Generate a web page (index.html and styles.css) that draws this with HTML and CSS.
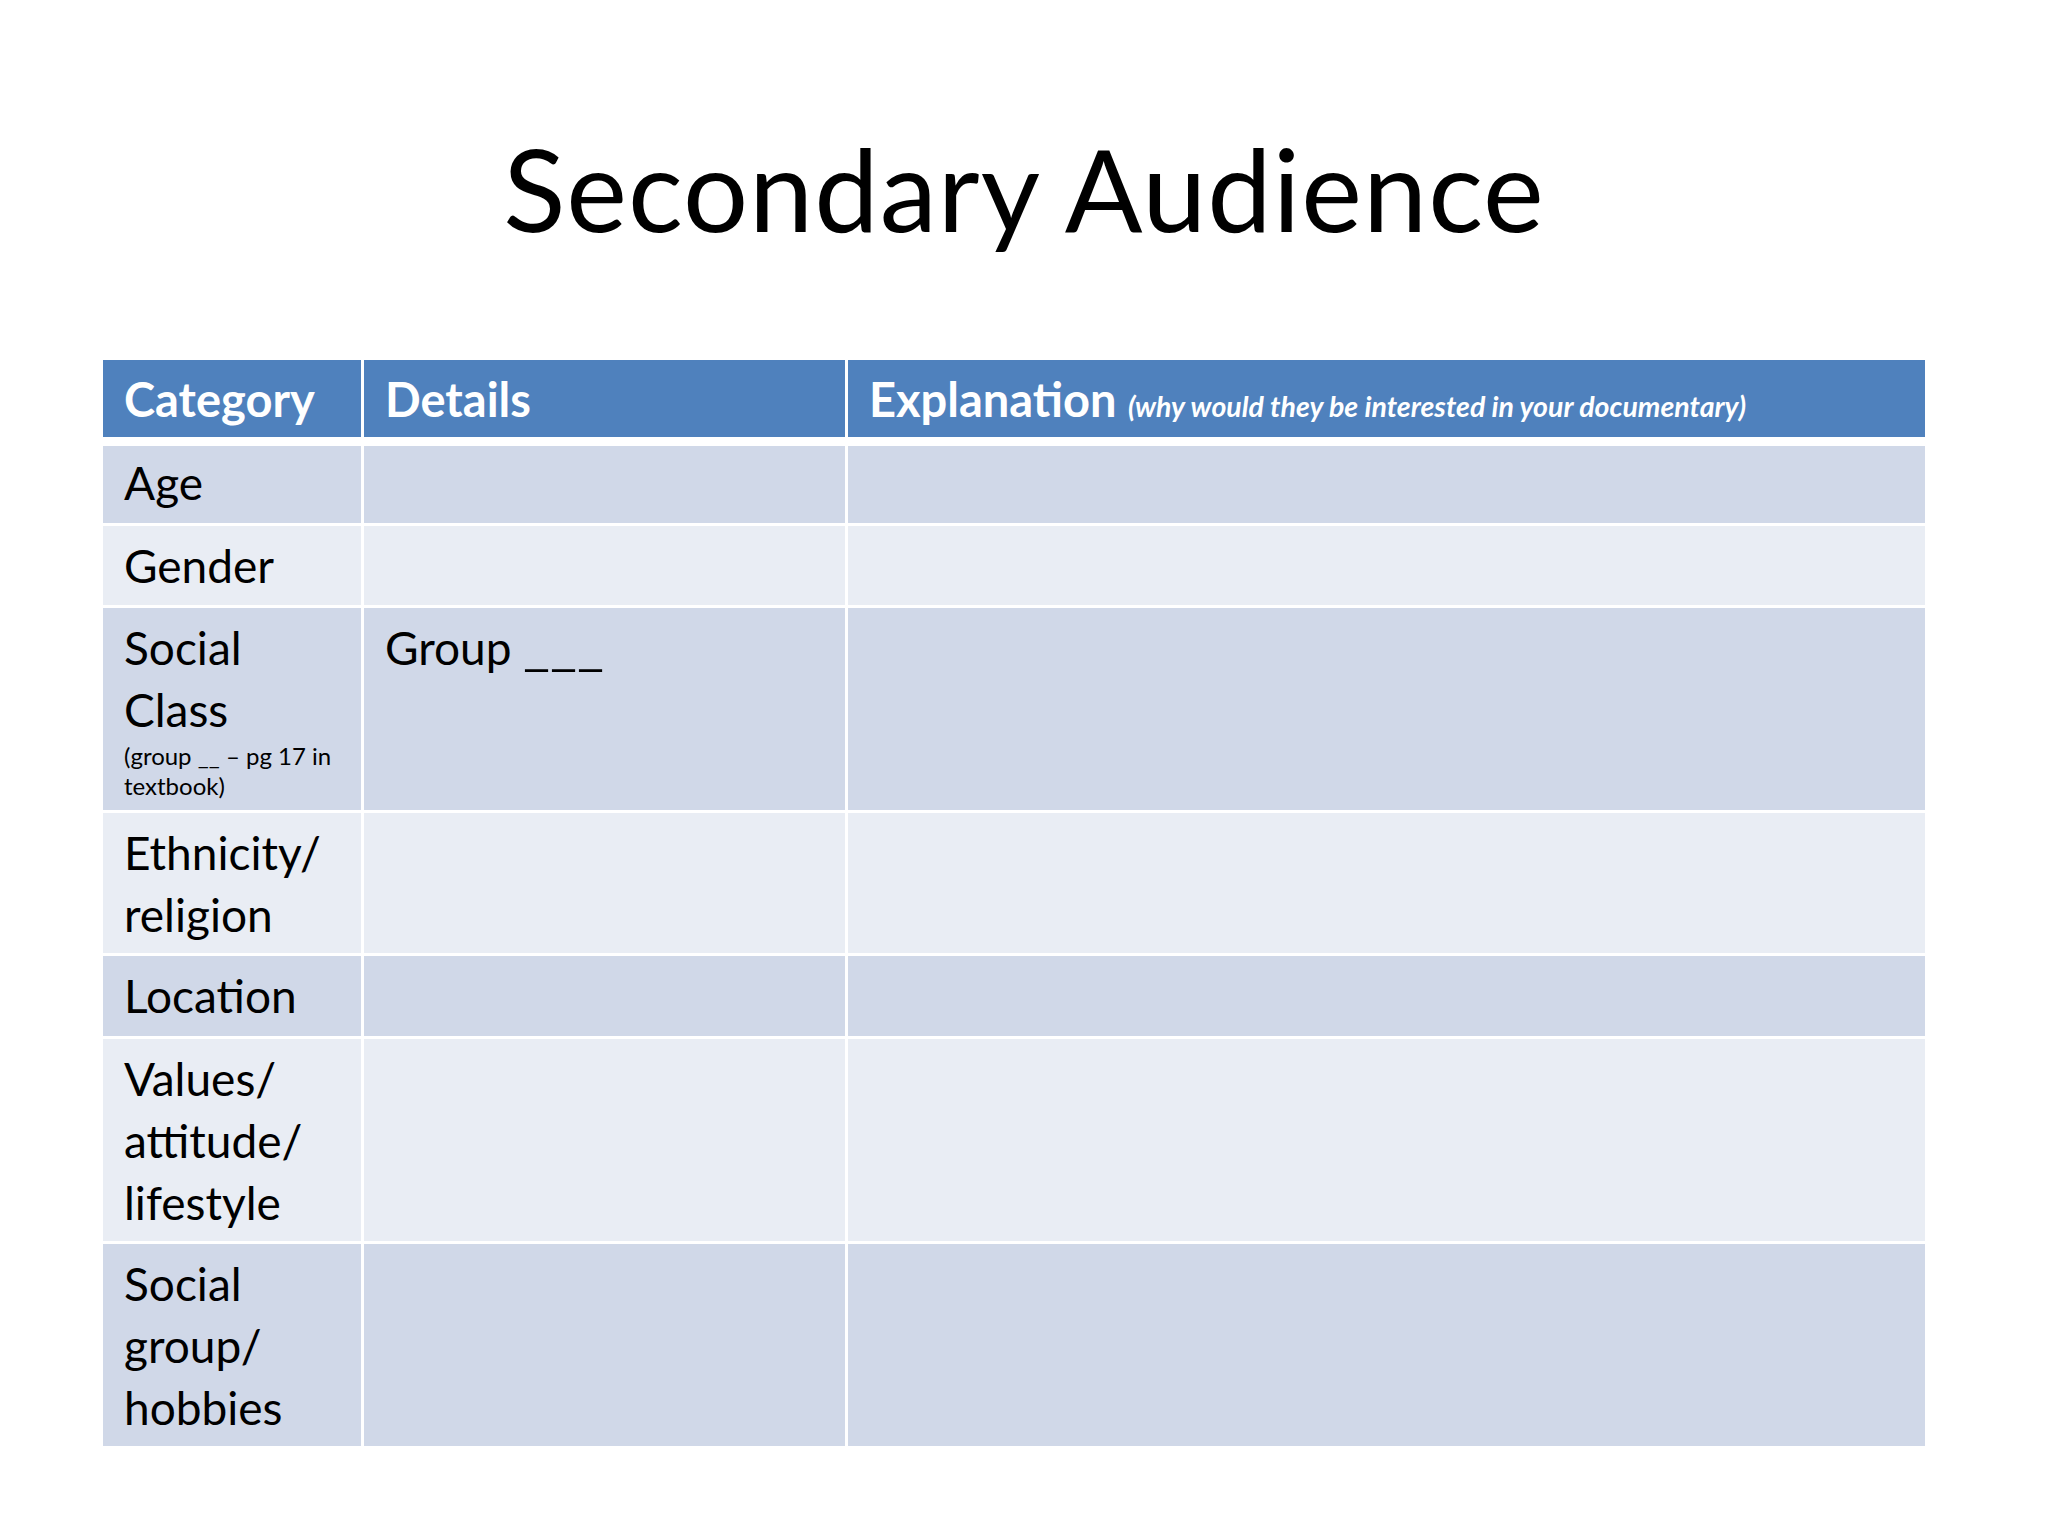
FILE: index.html
```html
<!DOCTYPE html>
<html lang="en">
<head>
<meta charset="utf-8">
<title>Secondary Audience</title>
<link rel="stylesheet" href="styles.css">
</head>
<body>
<div class="slide">
  <h1 class="title">Secondary Audience</h1>
  <div class="table">
    <div class="row head">
      <div class="cell">Category</div>
      <div class="cell">Details</div>
      <div class="cell">Explanation <span class="note">(why would they be interested in your documentary)</span></div>
    </div>
    <div class="row odd h1r">
      <div class="cell first">Age</div>
      <div class="cell"></div>
      <div class="cell"></div>
    </div>
    <div class="row even h1g">
      <div class="cell">Gender</div>
      <div class="cell"></div>
      <div class="cell"></div>
    </div>
    <div class="row odd h3">
      <div class="cell">Social<br>Class<div class="small">(group __ – pg 17 in<br>textbook)</div></div>
      <div class="cell">Group <span class="blank">___</span></div>
      <div class="cell"></div>
    </div>
    <div class="row even h2">
      <div class="cell">Ethnicity/<br>religion</div>
      <div class="cell"></div>
      <div class="cell"></div>
    </div>
    <div class="row odd h1l">
      <div class="cell">Location</div>
      <div class="cell"></div>
      <div class="cell"></div>
    </div>
    <div class="row even h3">
      <div class="cell">Values/<br>attitude/<br>lifestyle</div>
      <div class="cell"></div>
      <div class="cell"></div>
    </div>
    <div class="row odd h3">
      <div class="cell">Social<br>group/<br>hobbies</div>
      <div class="cell"></div>
      <div class="cell"></div>
    </div>
  </div>
</div>
</body>
</html>
```

FILE: styles.css
```css
html, body {
  margin: 0;
  padding: 0;
  background: #ffffff;
}

.slide {
  width: 2048px;
  height: 1536px;
  overflow: hidden;
  background: #ffffff;
  font-family: Lato, "Open Sans", sans-serif;
  color: #000000;
}

.title {
  margin: 118px 0 0 0;
  font-weight: 400;
  font-size: 115px;
  line-height: 138px;
  text-align: center;
  letter-spacing: 1px;
}

.table {
  margin: 104px 0 0 103px;
  width: 1822px;
  display: flex;
  flex-direction: column;
  gap: 3px;
}

.row {
  display: grid;
  grid-template-columns: 258px 481px 1077px;
  column-gap: 3px;
}

.cell {
  padding: 9px 20px 0 21px;
  font-size: 46px;
  line-height: 62px;
  box-sizing: border-box;
}

.cell.first {
  padding-top: 6px;
}

.head {
  height: 77px;
  margin-bottom: 6px;
}

.head .cell {
  background: #4f81bd;
  color: #ffffff;
  font-weight: 700;
  font-size: 47px;
  padding-top: 8px;
}

.note {
  font-size: 28.5px;
  font-style: italic;
  font-weight: 700;
}

.odd .cell { background: #d0d8e8; }
.even .cell { background: #e9edf4; }

.h1r { height: 77px; }
.h1g { height: 79px; }
.h1l { height: 80px; }
.h2 { height: 140px; }
.h3 { height: 202px; }

.small {
  font-size: 24px;
  line-height: 30px;
  margin-top: 0;
}

.blank {
  display: inline-block;
  transform: scaleX(1.28);
  transform-origin: left center;
}
```
